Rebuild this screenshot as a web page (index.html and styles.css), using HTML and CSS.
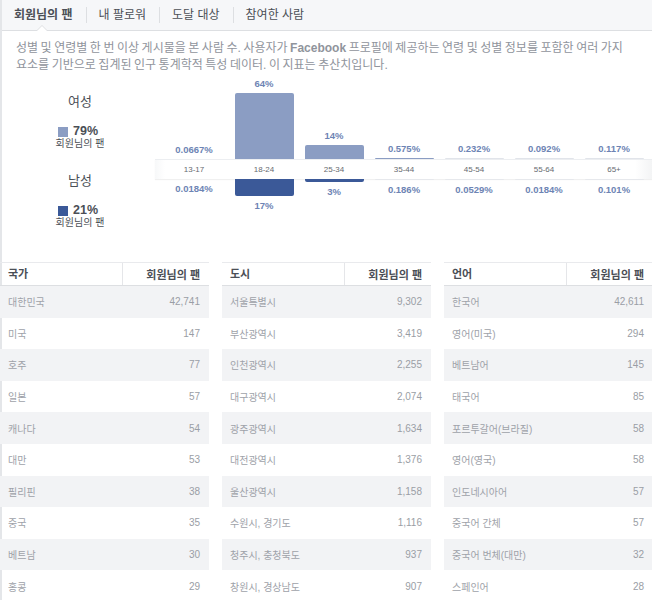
FILE: index.html
```html
<!DOCTYPE html>
<html lang="ko">
<head>
<meta charset="utf-8">
<title>회원님의 팬</title>
<link rel="stylesheet" href="styles.css">
</head>
<body>
<div class="page">
  <div class="tabs">
    <div class="tab active">회원님의 팬</div>
    <span class="sep"></span>
    <div class="tab">내 팔로워</div>
    <span class="sep"></span>
    <div class="tab">도달 대상</div>
    <span class="sep"></span>
    <div class="tab">참여한 사람</div>
  </div>

  <p class="desc">성별 및 연령별 한 번 이상 게시물을 본 사람 수. 사용자가 <b>Facebook</b> 프로필에 제공하는 연령 및 성별 정보를 포함한 여러 가지<br>요소를 기반으로 집계된 인구 통계학적 특성 데이터. 이 지표는 추산치입니다.</p>

  <div class="chart">
    <div class="legend">
      <div class="gender">여성</div>
      <div class="stat"><span class="swatch female"></span><b>79%</b></div>
      <div class="sub">회원님의 팬</div>
      <div class="gender second">남성</div>
      <div class="stat"><span class="swatch male"></span><b>21%</b></div>
      <div class="sub">회원님의 팬</div>
    </div>

    <div class="bars">
      <div class="row top">
        <div class="col"><span class="val">0.0667%</span><div class="bar female" style="height:0px"></div></div>
        <div class="col"><span class="val">64%</span><div class="bar female" style="height:66px"></div></div>
        <div class="col"><span class="val">14%</span><div class="bar female" style="height:14px"></div></div>
        <div class="col"><span class="val">0.575%</span><div class="bar female" style="height:1px"></div></div>
        <div class="col"><span class="val">0.232%</span><div class="bar female faint" style="height:1px"></div></div>
        <div class="col"><span class="val">0.092%</span><div class="bar female faint" style="height:1px"></div></div>
        <div class="col"><span class="val">0.117%</span><div class="bar female faint" style="height:1px"></div></div>
      </div>
      <div class="row band">
        <div class="col age">13-17</div>
        <div class="col age">18-24</div>
        <div class="col age">25-34</div>
        <div class="col age">35-44</div>
        <div class="col age">45-54</div>
        <div class="col age">55-64</div>
        <div class="col age">65+</div>
      </div>
      <div class="row bottom">
        <div class="col"><div class="bar male" style="height:0px"></div><span class="val">0.0184%</span></div>
        <div class="col"><div class="bar male" style="height:17px"></div><span class="val">17%</span></div>
        <div class="col"><div class="bar male" style="height:3px"></div><span class="val">3%</span></div>
        <div class="col"><div class="bar male faint" style="height:1px"></div><span class="val">0.186%</span></div>
        <div class="col"><div class="bar male faint" style="height:1px"></div><span class="val">0.0529%</span></div>
        <div class="col"><div class="bar male faint" style="height:1px"></div><span class="val">0.0184%</span></div>
        <div class="col"><div class="bar male faint" style="height:1px"></div><span class="val">0.101%</span></div>
      </div>
    </div>
  </div>

  <div class="tables">
    <div class="tbl">
      <div class="th"><span class="h1">국가</span><span class="h2">회원님의 팬</span></div>
      <div class="tr"><span>대한민국</span><span class="num">42,741</span></div>
      <div class="tr"><span>미국</span><span class="num">147</span></div>
      <div class="tr"><span>호주</span><span class="num">77</span></div>
      <div class="tr"><span>일본</span><span class="num">57</span></div>
      <div class="tr"><span>캐나다</span><span class="num">54</span></div>
      <div class="tr"><span>대만</span><span class="num">53</span></div>
      <div class="tr"><span>필리핀</span><span class="num">38</span></div>
      <div class="tr"><span>중국</span><span class="num">35</span></div>
      <div class="tr"><span>베트남</span><span class="num">30</span></div>
      <div class="tr"><span>홍콩</span><span class="num">29</span></div>
    </div>
    <div class="tbl">
      <div class="th"><span class="h1">도시</span><span class="h2">회원님의 팬</span></div>
      <div class="tr"><span>서울특별시</span><span class="num">9,302</span></div>
      <div class="tr"><span>부산광역시</span><span class="num">3,419</span></div>
      <div class="tr"><span>인천광역시</span><span class="num">2,255</span></div>
      <div class="tr"><span>대구광역시</span><span class="num">2,074</span></div>
      <div class="tr"><span>광주광역시</span><span class="num">1,634</span></div>
      <div class="tr"><span>대전광역시</span><span class="num">1,376</span></div>
      <div class="tr"><span>울산광역시</span><span class="num">1,158</span></div>
      <div class="tr"><span>수원시, 경기도</span><span class="num">1,116</span></div>
      <div class="tr"><span>청주시, 충청북도</span><span class="num">937</span></div>
      <div class="tr"><span>창원시, 경상남도</span><span class="num">907</span></div>
    </div>
    <div class="tbl">
      <div class="th"><span class="h1">언어</span><span class="h2">회원님의 팬</span></div>
      <div class="tr"><span>한국어</span><span class="num">42,611</span></div>
      <div class="tr"><span>영어(미국)</span><span class="num">294</span></div>
      <div class="tr"><span>베트남어</span><span class="num">145</span></div>
      <div class="tr"><span>태국어</span><span class="num">85</span></div>
      <div class="tr"><span>포르투갈어(브라질)</span><span class="num">58</span></div>
      <div class="tr"><span>영어(영국)</span><span class="num">58</span></div>
      <div class="tr"><span>인도네시아어</span><span class="num">57</span></div>
      <div class="tr"><span>중국어 간체</span><span class="num">57</span></div>
      <div class="tr"><span>중국어 번체(대만)</span><span class="num">32</span></div>
      <div class="tr"><span>스페인어</span><span class="num">28</span></div>
    </div>
  </div>
</div>
</body>
</html>
```

FILE: styles.css
```css
html, body {
  margin: 0;
  padding: 0;
  overflow: hidden;
  background: #fff;
}
body {
  font-family: "Liberation Sans", "Noto Sans CJK KR", sans-serif;
  color: #4b4f56;
  width: 652px;
}
.page {
  width: 652px;
  border-left: 2px solid #e4e6e9;
  box-sizing: border-box;
}

/* tabs */
.tabs {
  display: flex;
  align-items: center;
  height: 30px;
  background: #f6f7f9;
  border-bottom: 1px solid #dddfe2;
  position: relative;
}
.tab {
  font-size: 12px;
  padding: 0 13px 0 12px;
  line-height: 30px;
  color: #4b4f56;
}
.tab.active {
  font-weight: bold;
  position: relative;
}
.tab.active::after {
  content: "";
  position: absolute;
  left: 34px;
  bottom: -1px;
  width: 0;
  height: 0;
  border-left: 6px solid transparent;
  border-right: 6px solid transparent;
  border-bottom: 6px solid #dddfe2;
}
.tab.active::before {
  content: "";
  position: absolute;
  left: 35px;
  bottom: -1px;
  width: 0;
  height: 0;
  border-left: 5px solid transparent;
  border-right: 5px solid transparent;
  border-bottom: 5px solid #fff;
  z-index: 2;
}
.sep {
  width: 1px;
  height: 16px;
  background: #dddfe2;
}

/* description */
.desc {
  margin: 9px 0 0 0;
  padding-left: 14px;
  font-size: 12px;
  word-spacing: -0.8px;
  line-height: 17px;
  color: #90949c;
  white-space: nowrap;
}
.desc b {
  font-weight: bold;
}

/* chart */
.chart {
  display: flex;
}
.legend {
  width: 153px;
  padding-left: 3px;
  box-sizing: border-box;
  display: flex;
  flex-direction: column;
  align-items: center;
}
.gender {
  margin-top: 19px;
  font-size: 13px;
  line-height: 18px;
  color: #4b4f56;
}
.gender.second {
  margin-top: 22px;
}
.stat {
  margin-top: 13px;
  display: flex;
  align-items: center;
  gap: 5px;
  line-height: 14px;
  font-size: 12.5px;
  margin-right: 4px;
}
.stat b {
  color: #4b4f56;
}
.swatch {
  width: 10px;
  height: 10px;
  display: inline-block;
  margin-top: 2px;
}
.swatch.female { background: #8b9dc3; }
.swatch.male { background: #3b5998; }
.sub {
  font-size: 10px;
  line-height: 12px;
  color: #4b4f56;
}

.bars {
  width: 497px;
  display: flex;
  flex-direction: column;
}
.row {
  display: flex;
  padding-left: 4px;
}
.col {
  width: 70px;
  display: flex;
  flex-direction: column;
  align-items: center;
}
.row.top {
  height: 85px;
}
.row.top .col {
  justify-content: flex-end;
}
.bar {
  width: 59px;
}
.bar.female {
  background: #8b9dc3;
  border-radius: 2px 2px 0 0;
}
.bar.male {
  background: #3b5998;
  border-radius: 0 0 2px 2px;
}
.bar.faint.female { background: #e1e4ea; }
.bar.faint.male { background: #e6e8ec; }
.val {
  font-size: 9.5px;
  font-weight: bold;
  color: #6d84b4;
  line-height: 11px;
}
.row.top .val { margin-bottom: 4px; }
.row.bottom .val { margin-top: 4px; }

.row.band {
  height: 20px;
  background: linear-gradient(to right, #f7f8f9 0, #fff 10px, #fff 480px, #f3f4f5 497px);
  box-shadow: 0 1px 1px rgba(0,0,0,0.06);
  border-top: 1px solid #eceef1;
  box-sizing: border-box;
}
.age {
  justify-content: center;
  font-size: 8px;
  color: #666a70;
  line-height: 18px;
}

/* tables */
.tables {
  margin-top: 33px;
  display: grid;
  grid-template-columns: 209px 209px 209px;
  column-gap: 13px;
  margin-left: -2px;
}
.tbl {
  font-size: 10px;
}
.th {
  display: flex;
  height: 22px;
  align-items: center;
  border-top: 1px solid #e9eaed;
  border-bottom: 1px solid #dddfe2;
  font-weight: bold;
  color: #4b4f56;
  font-size: 11px;
}
.h1 {
  width: 123px;
  box-sizing: border-box;
  padding-left: 8px;
  border-right: 1px solid #e5e6e9;
  line-height: 22px;
}
.h2 {
  flex: 1;
  text-align: right;
  padding-right: 9px;
}
.tr {
  display: flex;
  justify-content: space-between;
  align-items: center;
  height: 31.6px;
  padding: 0 9px 0 8px;
  color: #9ea2a9;
}
.tr:nth-child(even) {
  background: #f2f3f5;
}
.num {
  color: #9a9ea5;
}
```
